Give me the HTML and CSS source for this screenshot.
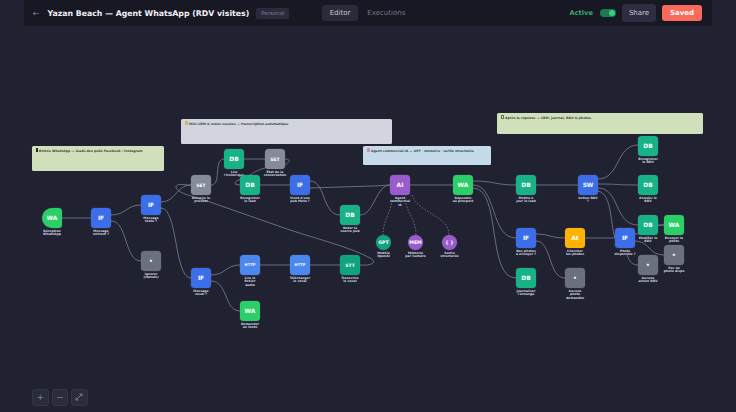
FILE: index.html
```html
<!DOCTYPE html>
<html lang="en">
<head>
  <meta charset="UTF-8">
  <meta name="viewport" content="width=device-width, initial-scale=1.0">
  <title>Yazan Beach — Agent WhatsApp (RDV visites)</title>
  <link rel="stylesheet" href="styles.css">
</head>
<body>
  <div class="app">
    <div class="canvas">
      <!-- sticky notes -->
      <div class="note note-entry"><span class="ico ico-phone"></span>Entrée WhatsApp — leads des pubs Facebook / Instagram</div>
      <div class="note note-crm"><span class="ico ico-book"></span>Mini-CRM &amp; notes vocales — transcription automatique</div>
      <div class="note note-agent"><span class="ico ico-bot"></span>Agent commercial IA — GPT · mémoire · sortie structurée</div>
      <div class="note note-after"><span class="ico ico-check"></span>Après la réponse — CRM, journal, RDV &amp; photos</div>

      <!-- edges -->
      <svg class="edges" width="736" height="412" viewBox="0 0 736 412" fill="none">
        <g class="edge">
          <path d="M62 218H91"/>
          <path d="M111 215C126 215 126 205 141 205"/>
          <path d="M111 221C128 221 124 261 141 261"/>
          <path d="M161 202C176 202 176 185 191 185"/>
          <path d="M161 208C178 208 174 278 191 278"/>
          <path d="M211 185C222 185 213 159 224 159"/>
          <path d="M244 159H265"/>
          <path d="M285 159C292 159 289 164 283 165C262 167 256 171 250 175C244 179 234 180 235 184L240 185"/>
          <path d="M260 185H290"/>
          <path d="M310 181C326 181 322 215 340 215"/>
          <path d="M310 188L372 186C380 186 384 185 390 185"/>
          <path d="M360 215C374 215 376 185 390 185"/>
          <path d="M360 265C372 266 378 262 370 258C350 247 320 240 290 230L210 202C195 197 176 193 176 187C176 183 184 185 191 185"/>
          <path d="M410 185H453"/>
          <path d="M473 181C495 181 495 185 516 185"/>
          <path d="M473 185C497 185 490 238 516 238"/>
          <path d="M473 188C502 188 486 278 516 278"/>
          <path d="M536 185H578"/>
          <path d="M598 179C620 179 616 145 638 145"/>
          <path d="M598 184C620 184 616 185 638 185"/>
          <path d="M598 188C620 188 614 225 638 225"/>
          <path d="M598 191C612 194 610 222 615 238"/>
          <path d="M536 234C550 234 550 238 565 238"/>
          <path d="M536 241C552 241 548 278 565 278"/>
          <path d="M585 238H615"/>
          <path d="M635 234C648 234 650 225 664 225"/>
          <path d="M635 241C650 241 648 255 664 255"/>
          <path d="M627 255C630 262 632 265 638 265"/>
          <path d="M658 225H664"/>
          <path d="M211 275C226 275 225 265 240 265"/>
          <path d="M211 281C228 281 224 311 240 311"/>
          <path d="M260 265H290"/>
          <path d="M310 265H340"/>
        </g>
        <g class="edge edge-dashed">
          <path d="M392 200C390 215 383 220 383 235"/>
          <path d="M405 200C408 215 416 220 416 235"/>
          <path d="M412 195C420 215 449 215 449 235"/>
        </g>
      </svg>

      <!-- nodes -->
      <div class="node n-recv"><div class="tile wa trigger">WA</div><div class="label">Réception<br>WhatsApp</div></div>
      <div class="node n-incoming"><div class="tile blue">IF</div><div class="label">Message<br>entrant ?</div></div>
      <div class="node n-text"><div class="tile blue">IF</div><div class="label">Message<br>texte ?</div></div>
      <div class="node n-ignore"><div class="tile noop">•</div><div class="label">Ignorer<br>(statuts)</div></div>
      <div class="node n-name"><div class="tile grey small">SET</div><div class="label">Extraire le<br>prénom</div></div>
      <div class="node n-history"><div class="tile db">DB</div><div class="label">Lire<br>l'historique</div></div>
      <div class="node n-state"><div class="tile grey small">SET</div><div class="label">État de la<br>conversation</div></div>
      <div class="node n-lead"><div class="tile db">DB</div><div class="label">Enregistrer<br>le lead</div></div>
      <div class="node n-meta"><div class="tile blue">IF</div><div class="label">Vient d'une<br>pub Meta ?</div></div>
      <div class="node n-source"><div class="tile db">DB</div><div class="label">Noter la<br>source pub</div></div>
      <div class="node n-vocal"><div class="tile blue">IF</div><div class="label">Message<br>vocal ?</div></div>
      <div class="node n-file"><div class="tile http tiny">HTTP</div><div class="label">Lire le<br>fichier<br>audio</div></div>
      <div class="node n-down"><div class="tile http tiny">HTTP</div><div class="label">Télécharger<br>le vocal</div></div>
      <div class="node n-stt"><div class="tile teal small">STT</div><div class="label">Transcrire<br>le vocal</div></div>
      <div class="node n-ask"><div class="tile wa">WA</div><div class="label">Demander<br>un texte</div></div>
      <div class="node n-agent"><div class="tile ai">AI</div><div class="label">Agent<br>commercial<br>IA</div></div>
      <div class="node n-reply"><div class="tile wa">WA</div><div class="label">Répondre<br>au prospect</div></div>
      <div class="node round n-gpt"><div class="tile teal">GPT</div><div class="label">Modèle<br>OpenAI</div></div>
      <div class="node round n-mem"><div class="tile ai">MEM</div><div class="label">Mémoire<br>par numéro</div></div>
      <div class="node round n-out"><div class="tile ai">{ }</div><div class="label">Sortie<br>structurée</div></div>
      <div class="node n-update"><div class="tile db">DB</div><div class="label">Mettre à<br>jour le lead</div></div>
      <div class="node n-photos"><div class="tile blue">IF</div><div class="label">Des photos<br>à envoyer ?</div></div>
      <div class="node n-log"><div class="tile db">DB</div><div class="label">Journaliser<br>l'échange</div></div>
      <div class="node n-search"><div class="tile at">At</div><div class="label">Chercher<br>les photos</div></div>
      <div class="node n-nophoto"><div class="tile noop">•</div><div class="label">Aucune<br>photo<br>demandée</div></div>
      <div class="node n-switch"><div class="tile blue">SW</div><div class="label">Action RDV<br>?</div></div>
      <div class="node n-avail"><div class="tile blue">IF</div><div class="label">Photo<br>disponible ?</div></div>
      <div class="node n-save"><div class="tile db">DB</div><div class="label">Enregistrer<br>le RDV</div></div>
      <div class="node n-cancel"><div class="tile db">DB</div><div class="label">Annuler le<br>RDV</div></div>
      <div class="node n-edit"><div class="tile db">DB</div><div class="label">Modifier le<br>RDV</div></div>
      <div class="node n-send"><div class="tile wa">WA</div><div class="label">Envoyer la<br>photo</div></div>
      <div class="node n-none"><div class="tile noop">•</div><div class="label">Pas de<br>photo dispo</div></div>
      <div class="node n-noaction"><div class="tile noop">•</div><div class="label">Aucune<br>action RDV</div></div>

      <div class="zoom-bar">
        <button class="zoom-btn">+</button>
        <button class="zoom-btn">−</button>
        <button class="zoom-btn">
          <svg width="10" height="10" viewBox="0 0 10 10" fill="none" stroke="currentColor" stroke-width="1"><path d="M2 8L8 2M5.5 2H8V4.5M2 5.5V8H4.5"/></svg>
        </button>
      </div>
    </div>

    <header class="topbar">
      <div class="topbar-left">
        <span class="back">←</span>
        <span class="title">Yazan Beach — Agent WhatsApp (RDV visites)</span>
        <span class="badge">Personal</span>
      </div>
      <nav class="tabs">
        <span class="tab active">Editor</span>
        <span class="tab">Executions</span>
      </nav>
      <div class="topbar-right">
        <span class="status">Active</span>
        <span class="toggle"><span class="knob"></span></span>
        <button class="btn btn-share">Share</button>
        <button class="btn btn-save">Saved</button>
      </div>
    </header>
  </div>
</body>
</html>
```

FILE: styles.css
```css
* {
  box-sizing: border-box;
}
body {
  margin: 0;
  font-family: "DejaVu Sans", sans-serif;
  background-color: #202232;
}
.app {
  position: relative;
  width: 736px;
  height: 412px;
  overflow: hidden;
}
.canvas {
  position: absolute;
  inset: 0;
  background-color: #202232;
  background-image: radial-gradient(#272939 0.5px, transparent 0.6px);
  background-size: 3.5px 3.5px;
}

/* top bar */
.topbar {
  position: relative;
  display: grid;
  grid-template-columns: 1fr auto 1fr;
  align-items: center;
  height: 26px;
  margin: 0 24px;
  padding: 0 10px 0 9px;
  background-color: #171823;
}
.topbar-left,
.topbar-right {
  display: flex;
  align-items: center;
}
.topbar-right {
  justify-content: flex-end;
}
.back {
  width: 14.5px;
  color: #8a8c9c;
  font-size: 8px;
}
.title {
  color: #f0f0f5;
  font-size: 7.8px;
  font-weight: bold;
  white-space: nowrap;
}
.badge {
  margin-left: 7px;
  padding: 2px 5px;
  border-radius: 2px;
  background-color: #2a2b3d;
  color: #7b7d90;
  font-size: 5.4px;
  line-height: 7px;
}
.tabs {
  display: flex;
  align-items: center;
  gap: 2px;
}
.tab {
  padding: 0 7.5px;
  height: 16px;
  line-height: 16px;
  border-radius: 3px;
  color: #767889;
  font-size: 7px;
}
.tab.active {
  background-color: #2a2b3b;
  color: #c9cad4;
}
.status {
  color: #36a873;
  font-size: 6.7px;
  font-weight: bold;
}
.toggle {
  display: flex;
  justify-content: flex-end;
  align-items: center;
  width: 16px;
  height: 8px;
  margin: 0 6px 0 7px;
  padding: 1px;
  border-radius: 4px;
  background-color: #1f7a52;
}
.knob {
  width: 6px;
  height: 6px;
  border-radius: 50%;
  background-color: #35d07f;
}
.btn {
  height: 16px;
  padding: 0;
  border: none;
  border-radius: 3px;
  font-family: inherit;
  font-size: 7px;
}
.btn-share {
  width: 34px;
  height: 18px;
  background-color: #2c2d40;
  color: #c5c6d2;
}
.btn-save {
  width: 40px;
  margin-left: 6px;
  background-color: #f96a5b;
  color: #fff;
  font-weight: bold;
}

/* sticky notes */
.note {
  position: absolute;
  padding: 2px 4px;
  border-radius: 1.5px;
  color: #3a4440;
  font-size: 3.2px;
  font-weight: bold;
  line-height: 5px;
  white-space: nowrap;
}
.ico {
  display: inline-block;
  width: 3px;
  height: 4px;
  margin-right: 1px;
  border-radius: 0.5px;
  vertical-align: -0.5px;
}
.ico-phone { width: 2px; background-color: #1d2430; }
.ico-book { background-color: #e0b44c; }
.ico-bot { background-color: #d98ca8; }
.ico-check { border: 0.6px solid #4f8a3c; }
.note-entry { left: 32px; top: 146px; width: 132px; height: 25px; background-color: #d0e0bb; }
.note-crm { left: 181px; top: 119px; width: 211px; height: 25px; background-color: #d2d5e0; }
.note-agent { left: 363px; top: 146px; width: 128px; height: 19px; background-color: #c6dbe9; }
.note-after { left: 497px; top: 113px; width: 206px; height: 21px; background-color: #d0e0bb; }

/* edges */
.edges {
  position: absolute;
  left: 0;
  top: 0;
}
.edge path {
  stroke: #72748a;
  stroke-width: 0.9;
}
.edge-dashed path {
  stroke-dasharray: 1.6 1.6;
}

/* nodes */
.node {
  position: absolute;
  display: flex;
  flex-direction: column;
  align-items: center;
  width: 20px;
}
.tile {
  display: flex;
  align-items: center;
  justify-content: center;
  flex-shrink: 0;
  width: 20px;
  height: 20px;
  border-radius: 3.5px;
  color: #fff;
  font-size: 5.9px;
  font-weight: bold;
  box-shadow: 0 0 0 0.5px rgba(255, 255, 255, 0.1);
}
.tile.small { font-size: 4.5px; }
.tile.tiny { font-size: 3.65px; }
.trigger { border-radius: 10px 3.5px 3.5px 10px; }
.wa { background-color: #2bcf67; }
.blue { background-color: #3b6ee8; }
.grey { background-color: #858b9b; }
.db { background-color: #17b286; }
.ai { background-color: #9a5bcf; }
.http { background-color: #4a88f0; }
.teal { background-color: #10a37f; }
.at { background-color: #ffb300; }
.noop { background-color: #6b7080; }
.label {
  flex-shrink: 0;
  width: 44px;
  margin-top: 1.5px;
  color: #d4d6e0;
  font-size: 3.1px;
  font-weight: bold;
  line-height: 3.8px;
  text-align: center;
}
.round {
  width: 15px;
}
.round .tile {
  width: 15px;
  height: 15px;
  border-radius: 50%;
  font-size: 4.7px;
}

/* node places on the canvas */
.n-recv { left: 42px; top: 208px; }
.n-incoming { left: 91px; top: 208px; }
.n-text { left: 141px; top: 195px; }
.n-ignore { left: 141px; top: 251px; }
.n-name { left: 191px; top: 175px; }
.n-history { left: 224px; top: 149px; }
.n-state { left: 265px; top: 149px; }
.n-lead { left: 240px; top: 175px; }
.n-meta { left: 290px; top: 175px; }
.n-source { left: 340px; top: 205px; }
.n-vocal { left: 191px; top: 268px; }
.n-file { left: 240px; top: 255px; }
.n-down { left: 290px; top: 255px; }
.n-stt { left: 340px; top: 255px; }
.n-ask { left: 240px; top: 301px; }
.n-agent { left: 390px; top: 175px; }
.n-reply { left: 453px; top: 175px; }
.n-gpt { left: 376px; top: 235px; }
.n-mem { left: 408px; top: 235px; }
.n-out { left: 442px; top: 235px; }
.n-update { left: 516px; top: 175px; }
.n-photos { left: 516px; top: 228px; }
.n-log { left: 516px; top: 268px; }
.n-search { left: 565px; top: 228px; }
.n-nophoto { left: 565px; top: 268px; }
.n-switch { left: 578px; top: 175px; }
.n-avail { left: 615px; top: 228px; }
.n-save { left: 638px; top: 136px; }
.n-cancel { left: 638px; top: 175px; }
.n-edit { left: 638px; top: 215px; }
.n-send { left: 664px; top: 215px; }
.n-none { left: 664px; top: 245px; }
.n-noaction { left: 638px; top: 255px; }

/* zoom controls */
.zoom-bar {
  position: absolute;
  left: 32px;
  top: 389px;
  display: flex;
  gap: 3px;
}
.zoom-btn {
  display: flex;
  align-items: center;
  justify-content: center;
  width: 16.5px;
  height: 16.5px;
  padding: 0;
  border: 0.5px solid #333547;
  border-radius: 3px;
  background-color: #2a2c3e;
  color: #7d7f90;
  font-family: inherit;
  font-size: 9px;
}
```
